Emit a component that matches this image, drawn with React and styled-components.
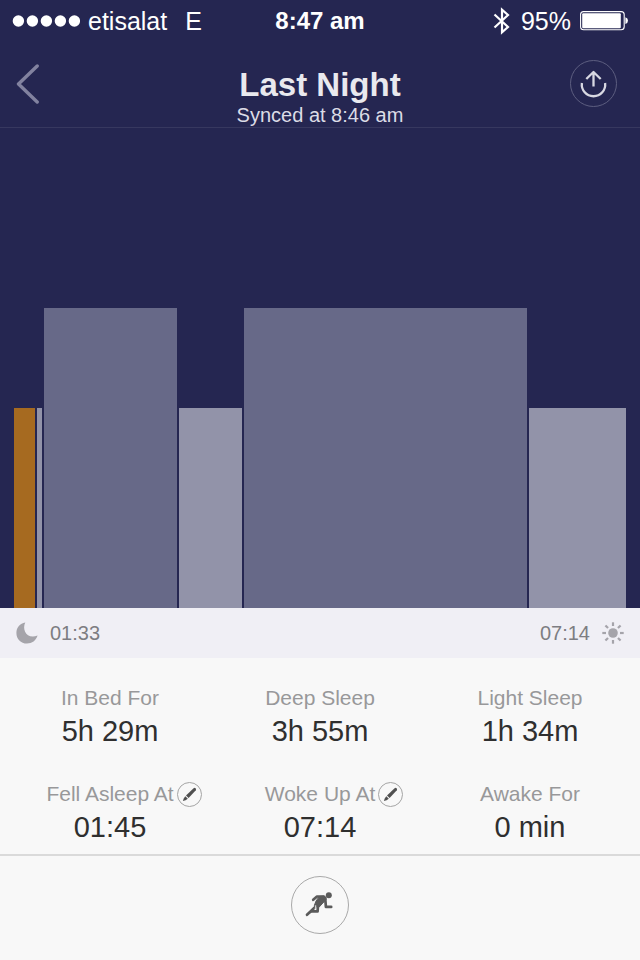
import React from "react";
import styled, { createGlobalStyle } from "styled-components";

const GlobalStyle = createGlobalStyle`
  *, *::before, *::after { box-sizing: border-box; }
  body {
    margin: 0;
    background: #f8f8f8;
    font-family: "Liberation Sans", Arial, sans-serif;
  }
  h1, p, dl, dt, dd { margin: 0; }
  svg { display: block; }
`;

const Screen = styled.main`
  display: flex;
  flex-direction: column;
  min-height: 100vh;
  background: #f8f8f8;
`;

const Night = styled.section`
  background: #252651;
  color: #fff;
`;

const StatusBar = styled.div`
  display: grid;
  grid-template-columns: 1fr auto 1fr;
  align-items: center;
  height: 42px;
  padding: 0 12px;
  font-size: 25px;
  line-height: 28px;
`;

const Carrier = styled.div`
  display: flex;
  align-items: center;
  gap: 8px;
`;

const Network = styled.span`
  margin-left: 10px;
`;

const Clock = styled.time`
  font-size: 24px;
  font-weight: 700;
`;

const Power = styled.div`
  display: flex;
  align-items: center;
  justify-content: flex-end;
  gap: 8px;
`;

const Charge = styled.span`
  margin-left: 2px;
`;

const Header = styled.header`
  display: grid;
  grid-template-columns: 1fr auto 1fr;
  align-items: start;
  height: 86px;
  padding: 18px 16px 0;
  border-bottom: 1px solid #37385f;
`;

const IconButton = styled.button`
  display: flex;
  align-items: center;
  justify-content: center;
  padding: 0;
  border: 0;
  background: none;
  color: inherit;
  cursor: pointer;
`;

const BackButton = styled(IconButton)`
  justify-self: start;
  padding-top: 4px;
`;

const ShareButton = styled(IconButton)`
  justify-self: end;
  width: 47px;
  height: 47px;
  margin-right: 7px;
  border: 1px solid #5d5e80;
  border-radius: 50%;
`;

const Heading = styled.div`
  padding-top: 6px;
  text-align: center;
`;

const Title = styled.h1`
  font-size: 33px;
  line-height: 38px;
  font-weight: 700;
  color: #e9e9ee;
`;

const Synced = styled.p`
  font-size: 20px;
  line-height: 22px;
  color: #dcdce6;
`;

const Chart = styled.div`
  display: flex;
  align-items: flex-end;
  gap: 2px;
  height: 480px;
  padding: 0 14px;
`;

const barColors = { awake: "#a66a20", light: "#9293a9", deep: "#676988" };

const Bar = styled.div`
  flex: ${({ $span }) => $span} 1 0;
  height: ${({ $kind }) => ($kind === "deep" ? "300px" : "200px")};
  background: ${({ $kind }) => barColors[$kind]};
`;

const RangeRow = styled.div`
  display: flex;
  align-items: center;
  justify-content: space-between;
  height: 50px;
  padding: 0 16px;
  background: #f0eff5;
  color: #7d7d82;
  font-size: 20px;
  line-height: 24px;
`;

const RangeEnd = styled.div`
  display: flex;
  align-items: center;
  gap: 12px;
`;

const Stats = styled.dl`
  display: grid;
  grid-template-columns: repeat(3, 1fr);
  row-gap: 34px;
  padding: 27px 5px 11px;
  border-bottom: 2px solid #dadada;
`;

const Label = styled.dt`
  display: grid;
  grid-template-columns: 1fr auto 1fr;
  column-gap: 3px;
  align-items: center;
  height: 26px;
  font-size: 21px;
  line-height: 24px;
  color: #98989a;
  white-space: nowrap;
`;

const LabelText = styled.span`
  grid-column: 2;
`;

const EditButton = styled(IconButton)`
  width: 25px;
  height: 25px;
  border: 1px solid #a5a5a5;
  border-radius: 50%;
`;

const Value = styled.dd`
  padding-top: 4px;
  font-size: 29px;
  line-height: 32px;
  color: #2f2f2f;
  text-align: center;
`;

const Footer = styled.footer`
  display: flex;
  flex: 1;
  align-items: flex-start;
  justify-content: center;
  padding: 20px 0 26px;
`;

const ActivityButton = styled(IconButton)`
  width: 58px;
  height: 58px;
  border: 1px solid #a9a9a9;
  border-radius: 50%;
`;

const SignalDots = () => (
  <svg width="68" height="12" viewBox="0 0 68 12" fill="#fff" role="img" aria-label="Signal: 5 of 5">
    {[6, 20, 34, 48, 62].map((x) => (
      <circle key={x} cx={x + 0.4} cy="6" r="5.7" />
    ))}
  </svg>
);

const BluetoothIcon = () => (
  <svg width="18" height="28" viewBox="0 0 18 28" fill="none" stroke="#fff" strokeWidth="2.2" role="img" aria-label="Bluetooth">
    <path d="M1.5 7.5 L15 20 L9 25.4 V2.6 L15 8 L1.5 20.5" />
  </svg>
);

const BatteryIcon = () => (
  <svg width="49" height="20" viewBox="0 0 49 20" role="img" aria-label="Battery">
    <rect x="1.6" y="0.6" width="43.6" height="18.2" rx="3" fill="none" stroke="#fff" strokeWidth="1.1" />
    <rect x="3.2" y="2.2" width="38.6" height="15" rx="1" fill="#fff" />
    <path d="M46.4 6.2 Q49 7 49 9.6 Q49 12.2 46.4 13 Z" fill="#fff" />
  </svg>
);

const ChevronIcon = () => (
  <svg width="24" height="40" viewBox="0 0 24 40" fill="none" stroke="#82829f" strokeWidth="3.4" strokeLinecap="round" strokeLinejoin="round" aria-hidden="true">
    <path d="M21.2 2 L2.5 20 L21.2 38" />
  </svg>
);

const ShareIcon = () => (
  <svg width="27" height="28" viewBox="0 0 27 28" fill="none" stroke="#d8d8e2" strokeWidth="2.3" strokeLinecap="butt" strokeLinejoin="round" aria-hidden="true">
    <path d="M13.5 16.5 V2.5 M6.3 9 L13.5 2 L20.7 9" />
    <path d="M1.9 13 A11.7 11.7 0 1 0 25.1 13" />
  </svg>
);

const MoonIcon = () => (
  <svg width="22" height="22" viewBox="0 0 22 22" fill="#a5a4aa" aria-hidden="true">
    <path d="M9.3 0.5 C5.7 7.6 10.7 17.6 21.6 13.6 C20 18.6 16 21.6 11 21.6 C4.8 21.6 0.4 17 0.4 11 C0.4 5.4 4 1.2 9.3 0.5 Z" />
  </svg>
);

const SunIcon = () => (
  <svg width="22" height="22" viewBox="0 0 22 22" fill="#a5a4aa" stroke="#a5a4aa" strokeWidth="2.2" aria-hidden="true">
    <circle cx="11" cy="11" r="4.8" stroke="none" />
    {[0, 45, 90, 135, 180, 225, 270, 315].map((angle) => (
      <path key={angle} d="M11 0.3 V4" transform={`rotate(${angle} 11 11)`} />
    ))}
  </svg>
);

const PencilIcon = () => (
  <svg width="15" height="15" viewBox="0 0 15 15" fill="#505050" aria-hidden="true">
    <path d="M11.6 1.2 Q12.8 0.5 13.6 1.3 Q14.4 2.1 13.8 3.2 L6.6 11 L4 8.6 Z" />
    <path d="M3.3 9.3 L5.8 11.7 L3.6 13.3 L0.9 14.1 L1.7 11.5 Z" />
  </svg>
);

const RunnerIcon = () => (
  <svg width="30" height="26" viewBox="0 0 30 26" fill="none" stroke="#5b5b5b" strokeWidth="2.7" strokeLinecap="round" strokeLinejoin="round" aria-hidden="true">
    <circle cx="23.8" cy="3.2" r="3" fill="#5b5b5b" stroke="none" />
    <path d="M8.2 7.8 L12 4.5 H18.5" />
    <path d="M14.5 4.5 L19.5 4 Q21.5 5 21 7.6 L14.2 15 L9.3 13.5 L10.8 9.6 Z" fill="#5b5b5b" strokeWidth="1" />
    <path d="M20.2 6 L20.9 14.9 H26.2" />
    <path d="M12.9 14.5 L12.6 19.3 H7.2" />
    <path d="M2 22.8 L10 15.3" />
    <path d="M2.4 22.6 L7.6 19.4 L9.8 14.8 Z" fill="#5b5b5b" strokeWidth="1" />
    <path d="M10.7 13.6 L10.2 17.2" stroke="#f8f8f8" strokeWidth="0.8" />
  </svg>
);

const phases = [
  { kind: "awake", span: 21 },
  { kind: "light", span: 5 },
  { kind: "deep", span: 133 },
  { kind: "light", span: 63 },
  { kind: "deep", span: 283 },
  { kind: "light", span: 97 },
];

const stats = [
  { label: "In Bed For", value: "5h 29m" },
  { label: "Deep Sleep", value: "3h 55m" },
  { label: "Light Sleep", value: "1h 34m" },
  { label: "Fell Asleep At", value: "01:45", editable: true },
  { label: "Woke Up At", value: "07:14", editable: true },
  { label: "Awake For", value: "0 min" },
];

export default function App() {
  return (
    <Screen>
      <GlobalStyle />
      <Night>
        <StatusBar>
          <Carrier>
            <SignalDots />
            <span>etisalat</span>
            <Network>E</Network>
          </Carrier>
          <Clock>8:47 am</Clock>
          <Power>
            <BluetoothIcon />
            <Charge>95%</Charge>
            <BatteryIcon />
          </Power>
        </StatusBar>
        <Header>
          <BackButton type="button" aria-label="Back">
            <ChevronIcon />
          </BackButton>
          <Heading>
            <Title>Last Night</Title>
            <Synced>Synced at 8:46 am</Synced>
          </Heading>
          <ShareButton type="button" aria-label="Share">
            <ShareIcon />
          </ShareButton>
        </Header>
        <Chart role="img" aria-label="Sleep phases">
          {phases.map(({ kind, span }, index) => (
            <Bar key={index} $kind={kind} $span={span} />
          ))}
        </Chart>
      </Night>
      <RangeRow>
        <RangeEnd>
          <MoonIcon />
          <time>01:33</time>
        </RangeEnd>
        <RangeEnd>
          <time>07:14</time>
          <SunIcon />
        </RangeEnd>
      </RangeRow>
      <Stats>
        {stats.map(({ label, value, editable }) => (
          <div key={label}>
            <Label>
              <LabelText>{label}</LabelText>
              {editable && (
                <EditButton type="button" aria-label={`Edit ${label}`}>
                  <PencilIcon />
                </EditButton>
              )}
            </Label>
            <Value>{value}</Value>
          </div>
        ))}
      </Stats>
      <Footer>
        <ActivityButton type="button" aria-label="Activity">
          <RunnerIcon />
        </ActivityButton>
      </Footer>
    </Screen>
  );
}
